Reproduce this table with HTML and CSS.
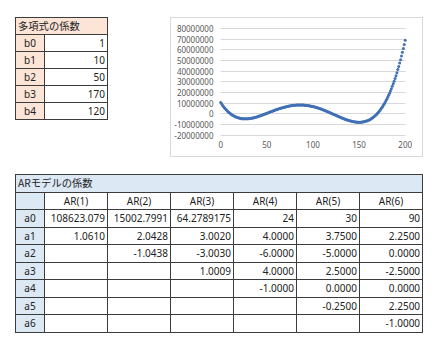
FILE: index.html
```html
<!DOCTYPE html>
<html lang="ja">
<head>
<meta charset="utf-8">
<link rel="stylesheet" href="styles.css">
</head>
<body>
<div class="top">
  <table class="poly">
    <colgroup><col class="c-key"><col class="c-val"></colgroup>
    <tr><td class="title" colspan="2">多項式の係数</td></tr>
    <tr><td class="key">b0</td><td class="num">1</td></tr>
    <tr><td class="key">b1</td><td class="num">10</td></tr>
    <tr><td class="key">b2</td><td class="num">50</td></tr>
    <tr><td class="key">b3</td><td class="num">170</td></tr>
    <tr><td class="key">b4</td><td class="num">120</td></tr>
  </table>
  <div class="chart">
    <svg width="253" height="140" viewBox="170 17 253 140">
      <rect x="170.5" y="17.5" width="252" height="139" fill="#fff" stroke="#d9d9d9"/>
      <g id="grid" stroke="#d9d9d9" stroke-width="1"></g>
      <g id="ylabels" class="axis" text-anchor="end"></g>
      <g id="xlabels" class="axis" text-anchor="middle"></g>
      <g id="dots" fill="#4170b5"></g>
    </svg>
  </div>
</div>
<table class="ar">
  <colgroup><col class="c-key"><col class="c-ar"><col class="c-ar"><col class="c-ar"><col class="c-ar"><col class="c-ar"><col class="c-ar"></colgroup>
  <tr><td class="title" colspan="7">ARモデルの係数</td></tr>
  <tr><td class="key"></td><td class="head">AR(1)</td><td class="head">AR(2)</td><td class="head">AR(3)</td><td class="head">AR(4)</td><td class="head">AR(5)</td><td class="head">AR(6)</td></tr>
  <tr><td class="key">a0</td><td class="num">108623.079</td><td class="num">15002.7991</td><td class="num">64.2789175</td><td class="num">24</td><td class="num">30</td><td class="num">90</td></tr>
  <tr><td class="key">a1</td><td class="num">1.0610</td><td class="num">2.0428</td><td class="num">3.0020</td><td class="num">4.0000</td><td class="num">3.7500</td><td class="num">2.2500</td></tr>
  <tr><td class="key">a2</td><td class="num"></td><td class="num">-1.0438</td><td class="num">-3.0030</td><td class="num">-6.0000</td><td class="num">-5.0000</td><td class="num">0.0000</td></tr>
  <tr><td class="key">a3</td><td class="num"></td><td class="num"></td><td class="num">1.0009</td><td class="num">4.0000</td><td class="num">2.5000</td><td class="num">-2.5000</td></tr>
  <tr><td class="key">a4</td><td class="num"></td><td class="num"></td><td class="num"></td><td class="num">-1.0000</td><td class="num">0.0000</td><td class="num">0.0000</td></tr>
  <tr><td class="key">a5</td><td class="num"></td><td class="num"></td><td class="num"></td><td class="num"></td><td class="num">-0.2500</td><td class="num">2.2500</td></tr>
  <tr><td class="key">a6</td><td class="num"></td><td class="num"></td><td class="num"></td><td class="num"></td><td class="num"></td><td class="num">-1.0000</td></tr>
</table>
<script src="script.js"></script>
</body>
</html>
```
FILE: styles.css
```css
html, body {
  margin: 0;
  background: #fff;
}
body {
  padding: 17px 0 0 15px;
  font-family: "Noto Sans", "Noto Sans CJK JP", sans-serif;
  font-size: 10px;
  color: #222;
}
.top {
  display: flex;
  align-items: flex-start;
}
table {
  border-collapse: collapse;
  table-layout: fixed;
}
td {
  border: 1px solid #3c3c3c;
  padding: 0 2px;
  line-height: 14px;
  white-space: nowrap;
  overflow: hidden;
}
.poly { width: 93px; }
.poly td { height: 16px; }
.poly .c-key { width: 29px; }
.poly .c-val { width: 63px; }
.poly .title, .poly .key { background: #fce4d6; }
.title {
  font-family: "Noto Sans CJK JP", sans-serif;
  font-size: 10.3px;
  text-align: left;
}
.key { text-align: center; }
.num { text-align: right; }
.head { text-align: center; }
.chart {
  margin-left: 62px;
  height: 140px;
}
.chart svg { display: block; }
.axis {
  font-family: "Noto Sans", sans-serif;
  font-size: 8px;
  fill: #595959;
}
.ar {
  margin-top: 17px;
  width: 408px;
}
.ar td { height: 16.5px; }
.ar .c-key { width: 29px; }
.ar .c-ar { width: 63px; }
.ar .title, .ar .key { background: #dde8f5; }
```
FILE: script.js
```js
(function () {
  var ns = "http://www.w3.org/2000/svg";
  var grid = document.getElementById("grid");
  var yl = document.getElementById("ylabels");
  var xl = document.getElementById("xlabels");
  var dots = document.getElementById("dots");
  var x0 = 220.7, xs = (405.2 - 220.7) / 200;
  var yZero = 113.3, ys = 10.67 / 10000000;
  function el(name, attrs, parent, text) {
    var e = document.createElementNS(ns, name);
    for (var k in attrs) e.setAttribute(k, attrs[k]);
    if (text !== undefined) e.textContent = text;
    parent.appendChild(e);
    return e;
  }
  for (var i = 0; i <= 10; i++) {
    var v = 80000000 - i * 10000000;
    var y = Math.round(yZero - v * ys) + 0.5;
    el("line", { x1: x0, x2: 405.5, y1: y, y2: y }, grid);
    el("text", { x: 213.5, y: y + 3 }, yl, String(v));
  }
  for (var j = 0; j <= 4; j++) {
    el("text", { x: x0 + j * 50 * xs, y: 148 }, xl, String(j * 50));
  }
  function f(x) { return (x - 10) * (x - 50) * (x - 120) * (x - 170); }
  for (var x = 0; x <= 200; x++) {
    el("circle", { cx: x0 + x * xs, cy: yZero - f(x) * ys, r: 1.5 }, dots);
  }
})();
```
